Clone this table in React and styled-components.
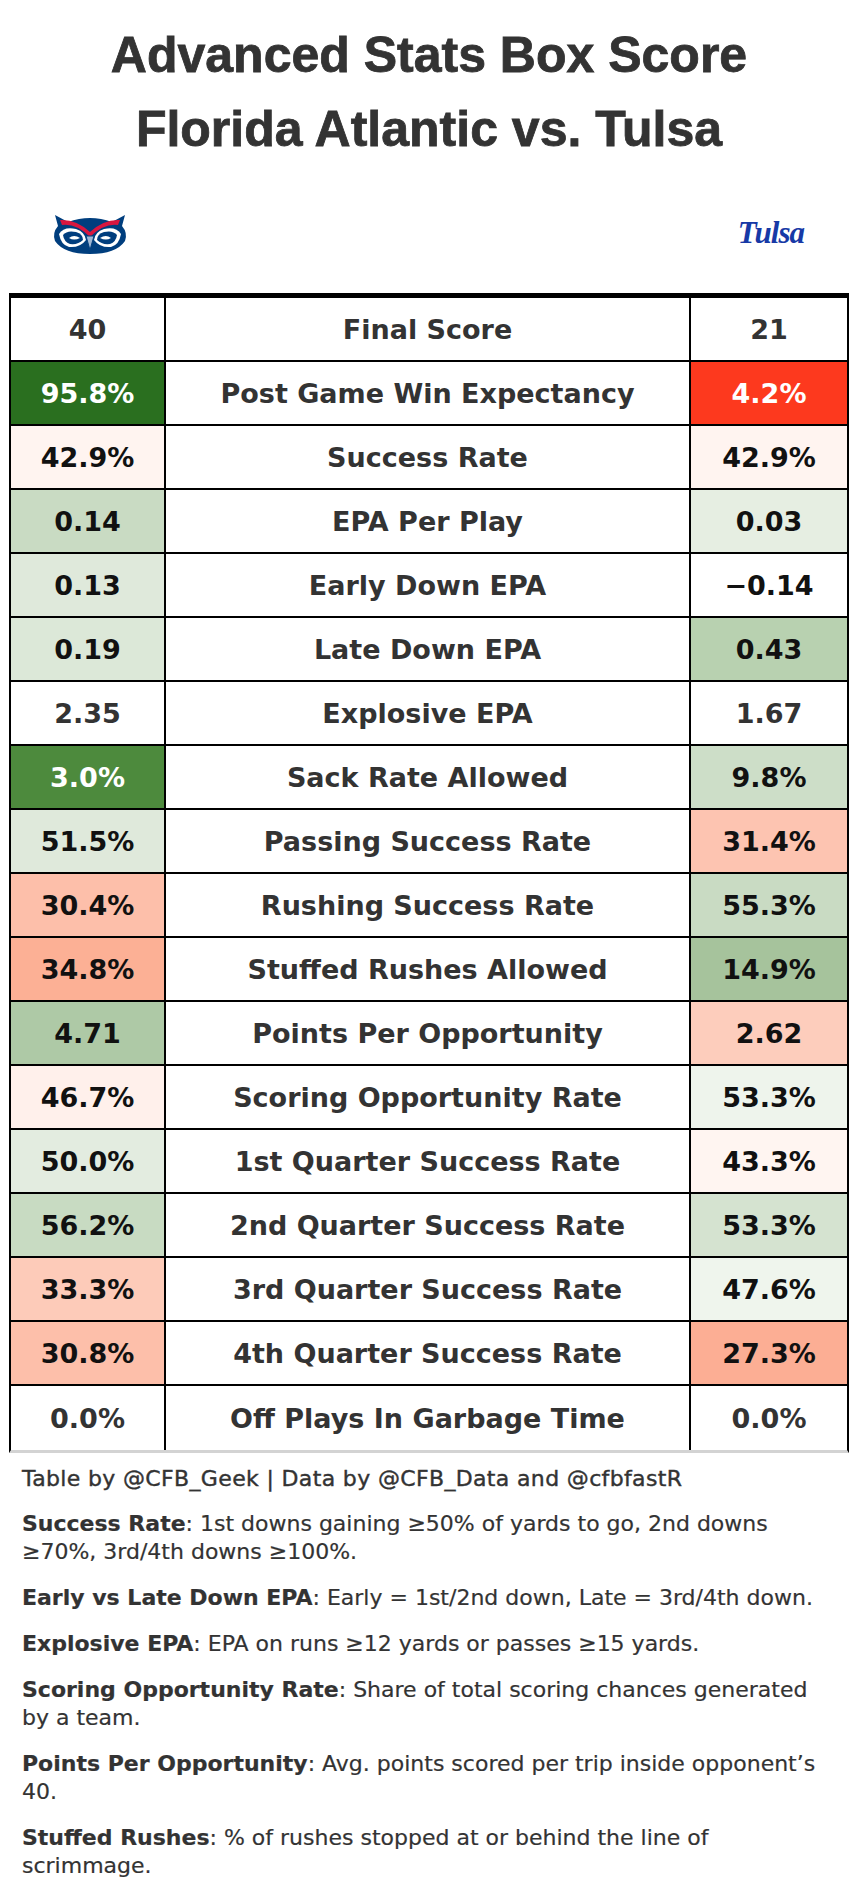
import React from 'react';
import styled, { createGlobalStyle } from 'styled-components';

const GlobalStyle = createGlobalStyle`
  body {
    margin: 0;
    background: #fff;
    font-family: 'Liberation Sans', Arial, sans-serif;
  }
`;

const Page = styled.div`
  width: 858px;
  background: #fff;
  color: #333;
  padding-bottom: 20px;
`;

const Title = styled.h1`
  margin: 0;
  padding-top: 18px;
  font-family: 'Liberation Sans', Arial, sans-serif;
  font-weight: 700;
  font-size: 50px;
  line-height: 74px;
  text-align: center;
  color: #333;
  -webkit-text-stroke: 0.8px #333;
`;

const LogoRow = styled.div`
  height: 127px;
  padding: 6px 52px 0 52px;
  box-sizing: border-box;
  display: flex;
  align-items: center;
  justify-content: space-between;
`;

const TulsaMark = styled.span`
  font-family: 'Liberation Serif', 'Times New Roman', serif;
  font-style: italic;
  font-weight: 700;
  font-size: 31px;
  letter-spacing: -1px;
  color: #1739a6;
  margin-right: 2px;
`;

const Table = styled.div`
  margin: 0 9px;
  border-top: 5px solid #000;
  border-left: 2px solid #000;
  border-right: 2px solid #000;
  border-bottom: 3px solid #d3d3d3;
`;

const Row = styled.div`
  display: grid;
  grid-template-columns: 155px 1fr 156px;
  height: 64px;
  border-bottom: ${(p) => (p.$last ? 'none' : '2px solid #000')};
  box-sizing: border-box;
`;

const Cell = styled.div`
  display: flex;
  align-items: center;
  justify-content: center;
  font-family: 'DejaVu Sans', sans-serif;
  font-weight: 700;
  font-size: 27px;
  background: ${(p) => p.$bg || '#fff'};
  color: ${(p) => p.$fg || '#333'};
  border-right: ${(p) => (p.$end ? 'none' : '2px solid #000')};
`;

const Label = styled(Cell)`
  color: #333;
`;

const Notes = styled.div`
  padding: 12px 20px 0 22px;
  font-family: 'DejaVu Sans', sans-serif;
  font-size: 22px;
  line-height: 28px;
  color: #333;
`;

const Note = styled.p`
  margin: 0 0 18px 0;
  -webkit-text-stroke: 0.2px #333;

  b {
    font-weight: 700;
  }
`;

const Credit = styled(Note)`
  margin-bottom: 17px;
  letter-spacing: 0.35px;
  -webkit-text-stroke: 0.4px #333;
`;

const OwlLogo = () => (
  <svg width="76" height="44" viewBox="0 0 76 44">
    <path
      d="M3 4 L16 11 Q38 3 60 11 L73 4 L70 15 Q76 22 73 30 Q64 43 38 43 Q12 43 3 30 Q0 22 6 15 Z"
      fill="#003e7e"
    />
    <path
      d="M8 9 Q24 8 38 21 Q52 8 68 9 L66 14 Q52 12 38 26 Q24 12 10 14 Z"
      fill="#d8163f"
    />
    <path d="M7 23 Q12 15 24 18 Q33 21 34 29 Q28 37 17 36 Q9 34 7 23 Z" fill="#fff" />
    <path d="M69 23 Q64 15 52 18 Q43 21 42 29 Q48 37 59 36 Q67 34 69 23 Z" fill="#fff" />
    <path d="M11 24 Q15 19 24 21 Q31 23 31 29 Q26 34 18 33 Q12 31 11 24 Z" fill="#003e7e" />
    <path d="M65 24 Q61 19 52 21 Q45 23 45 29 Q50 34 58 33 Q64 31 65 24 Z" fill="#003e7e" />
    <path d="M17 27 Q22 23 28 27 Q22 30 17 27 Z" fill="#fff" />
    <path d="M59 27 Q54 23 48 27 Q54 30 59 27 Z" fill="#fff" />
    <path d="M34 25 L42 25 L38 39 Z" fill="#9fb6d3" stroke="#003e7e" strokeWidth="1" />
  </svg>
);

const rows = [
  { label: 'Post Game Win Expectancy', l: '95.8%', lb: '#2a6f1f', lf: '#fff', r: '4.2%', rb: '#fd391e', rf: '#fff' },
  { label: 'Success Rate', l: '42.9%', lb: '#fff4f0', r: '42.9%', rb: '#fff4f0' },
  { label: 'EPA Per Play', l: '0.14', lb: '#c9dbc3', r: '0.03', rb: '#e6eee2' },
  { label: 'Early Down EPA', l: '0.13', lb: '#dfe9db', r: '\u22120.14', rb: '#fff', rf: '#111' },
  { label: 'Late Down EPA', l: '0.19', lb: '#dce8d8', r: '0.43', rb: '#b8d1b0' },
  { label: 'Explosive EPA', l: '2.35', r: '1.67' },
  { label: 'Sack Rate Allowed', l: '3.0%', lb: '#4d8a3d', lf: '#fff', r: '9.8%', rb: '#cddec8' },
  { label: 'Passing Success Rate', l: '51.5%', lb: '#dfe9db', r: '31.4%', rb: '#fdc4b1' },
  { label: 'Rushing Success Rate', l: '30.4%', lb: '#fdbfaa', r: '55.3%', rb: '#c9dbc3' },
  { label: 'Stuffed Rushes Allowed', l: '34.8%', lb: '#fcb095', r: '14.9%', rb: '#a6c39c' },
  { label: 'Points Per Opportunity', l: '4.71', lb: '#aec9a6', r: '2.62', rb: '#fdcdbc' },
  { label: 'Scoring Opportunity Rate', l: '46.7%', lb: '#fff0eb', r: '53.3%', rb: '#eef4ec' },
  { label: '1st Quarter Success Rate', l: '50.0%', lb: '#e3ece0', r: '43.3%', rb: '#fff5f1' },
  { label: '2nd Quarter Success Rate', l: '56.2%', lb: '#c8dbc2', r: '53.3%', rb: '#d5e3d0' },
  { label: '3rd Quarter Success Rate', l: '33.3%', lb: '#fdcbb9', r: '47.6%', rb: '#eff5ed' },
  { label: '4th Quarter Success Rate', l: '30.8%', lb: '#fdbfaa', r: '27.3%', rb: '#fcae94' },
  { label: 'Off Plays In Garbage Time', l: '0.0%', r: '0.0%' },
];

// colored cells get near-black text, plain white ones stay grey
const fgFor = (bg, fg) => fg || (bg ? '#111' : '#333');

export default function App() {
  return (
    <Page>
      <GlobalStyle />
      <Title>
        Advanced Stats Box Score
        <br />
        Florida Atlantic vs. Tulsa
      </Title>
      <LogoRow>
        <OwlLogo />
        <TulsaMark>Tulsa</TulsaMark>
      </LogoRow>
      <Table>
        <Row>
          <Cell>40</Cell>
          <Label>Final Score</Label>
          <Cell $end>21</Cell>
        </Row>
        {rows.map((row, i) => (
          <Row key={row.label} $last={i === rows.length - 1}>
            <Cell $bg={row.lb} $fg={fgFor(row.lb, row.lf)}>{row.l}</Cell>
            <Label>{row.label}</Label>
            <Cell $end $bg={row.rb} $fg={fgFor(row.rb, row.rf)}>{row.r}</Cell>
          </Row>
        ))}
      </Table>
      <Notes>
        <Credit>Table by @CFB_Geek | Data by @CFB_Data and @cfbfastR</Credit>
        <Note>
          <b>Success Rate</b>: 1st downs gaining ≥50% of yards to go, 2nd downs ≥70%, 3rd/4th downs ≥100%.
        </Note>
        <Note>
          <b>Early vs Late Down EPA</b>: Early = 1st/2nd down, Late = 3rd/4th down.
        </Note>
        <Note>
          <b>Explosive EPA</b>: EPA on runs ≥12 yards or passes ≥15 yards.
        </Note>
        <Note>
          <b>Scoring Opportunity Rate</b>: Share of total scoring chances generated by a team.
        </Note>
        <Note>
          <b>Points Per Opportunity</b>: Avg. points scored per trip inside opponent’s 40.
        </Note>
        <Note>
          <b>Stuffed Rushes</b>: % of rushes stopped at or behind the line of scrimmage.
        </Note>
      </Notes>
    </Page>
  );
}
